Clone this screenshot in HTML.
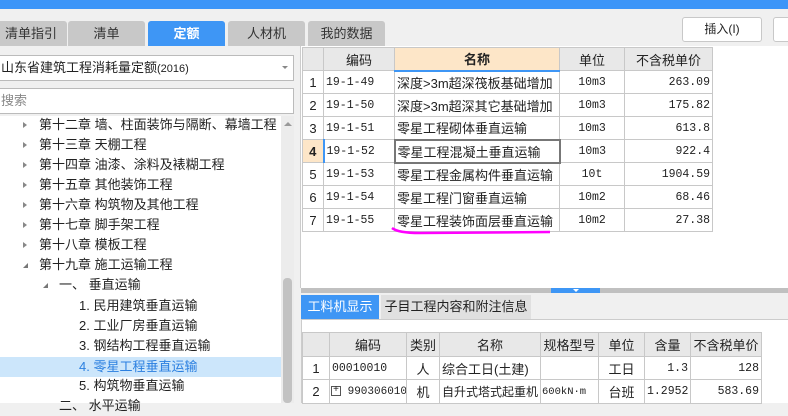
<!DOCTYPE html>
<html><head><meta charset="utf-8"><style>
*{margin:0;padding:0;box-sizing:border-box}
body{width:788px;height:403px;overflow:hidden;background:#f0f0f0;font-family:"Liberation Sans","Noto Sans CJK SC",sans-serif;font-size:12px;color:#222;position:relative}
.a{position:absolute}
.tab{position:absolute;top:21px;height:25px;background:#c8c8c8;border-radius:3px 3px 0 0;text-align:center;line-height:25px;font-size:13px;color:#333}
table{border-collapse:collapse;position:absolute;background:#fff;table-layout:fixed}
td{border:1px solid #c8c8c8;padding:0 2px;white-space:nowrap;overflow:hidden;font-size:13px}
.h td{background:#e8e8e8;text-align:center;font-size:13px}
.m{font-family:"Liberation Mono","Noto Sans CJK SC",monospace;font-size:11.5px}
.r{text-align:right}.c{text-align:center}
.tr{position:absolute;left:0;width:281px;height:20px;line-height:20px;font-size:13px}
.ar{position:absolute;left:23px;top:7px;width:0;height:0;border-left:4px solid #888;border-top:3px solid transparent;border-bottom:3px solid transparent}
.dn{position:absolute;width:0;height:0;border-right:5px solid #777;border-top:5px solid transparent}
</style></head><body>
<div class="a" style="left:0;top:0;width:788px;height:9px;background:#3c95f8"></div>
<div class="tab" style="left:-5px;width:72px">清单指引</div>
<div class="tab" style="left:68px;width:77px">清单</div>
<div class="tab" style="left:148px;width:77px;background:#3e96f5;color:#fff;font-weight:bold">定额</div>
<div class="tab" style="left:228px;width:77px">人材机</div>
<div class="tab" style="left:308px;width:77px">我的数据</div>
<div class="a" style="left:682px;top:17px;width:80px;height:25px;background:#fff;border:1px solid #c8c8c8;border-radius:3px;text-align:center;line-height:23px;font-size:12px">插入(I)</div>
<div class="a" style="left:773px;top:17px;width:30px;height:25px;background:#fff;border:1px solid #c8c8c8;border-radius:3px"></div>
<div class="a" style="left:-2px;top:55px;width:296px;height:26px;background:#fff;border:1px solid #bbb;line-height:24px;font-size:13px;padding-left:2px">山东省建筑工程消耗量定额<span style="font-size:11px">(2016)</span></div>
<div class="a" style="left:282px;top:66px;border-left:3px solid transparent;border-right:3px solid transparent;border-top:3px solid #888"></div>
<div class="a" style="left:-2px;top:88px;width:296px;height:26px;background:#fff;border:1px solid #bbb;line-height:24px;font-size:13px;color:#888;padding-left:2px">搜索</div>
<div class="a" style="left:0;top:116px;width:281px;height:287px;background:#fff"></div>
<div class="a" style="left:281px;top:116px;width:13px;height:287px;background:#ececec"></div>
<div class="a" style="left:283px;top:278px;width:9px;height:125px;background:#c2c2c2;border-radius:4px"></div>
<div class="a" style="left:284px;top:122px;border-left:4px solid transparent;border-right:4px solid transparent;border-bottom:4px solid #999"></div>
<div class="tr" style="top:115px"><i class="ar"></i><span class="a" style="left:39px">第十二章 墙、柱面装饰与隔断、幕墙工程</span></div>
<div class="tr" style="top:135px"><i class="ar"></i><span class="a" style="left:39px">第十三章 天棚工程</span></div>
<div class="tr" style="top:155px"><i class="ar"></i><span class="a" style="left:39px">第十四章 油漆、涂料及裱糊工程</span></div>
<div class="tr" style="top:175px"><i class="ar"></i><span class="a" style="left:39px">第十五章 其他装饰工程</span></div>
<div class="tr" style="top:195px"><i class="ar"></i><span class="a" style="left:39px">第十六章 构筑物及其他工程</span></div>
<div class="tr" style="top:215px"><i class="ar"></i><span class="a" style="left:39px">第十七章 脚手架工程</span></div>
<div class="tr" style="top:235px"><i class="ar"></i><span class="a" style="left:39px">第十八章 模板工程</span></div>
<div class="tr" style="top:255px"><i class="dn" style="left:23px;top:8px"></i><span class="a" style="left:39px">第十九章 施工运输工程</span></div>
<div class="tr" style="top:275px"><i class="dn" style="left:43px;top:8px"></i><span class="a" style="left:59px">一、 垂直运输</span></div>
<div class="tr" style="top:296px"><span class="a" style="left:79px">1. 民用建筑垂直运输</span></div>
<div class="tr" style="top:316px"><span class="a" style="left:79px">2. 工业厂房垂直运输</span></div>
<div class="tr" style="top:336px"><span class="a" style="left:79px">3. 钢结构工程垂直运输</span></div>
<div class="tr" style="top:357px;background:#cce6fb;color:#2a7fe0"><span class="a" style="left:79px">4. 零星工程垂直运输</span></div>
<div class="tr" style="top:376px"><span class="a" style="left:79px">5. 构筑物垂直运输</span></div>
<div class="tr" style="top:396px"><span class="a" style="left:59px">二、 水平运输</span></div>
<div class="a" style="left:300px;top:46px;width:488px;height:242px;background:#fff;border-left:1px solid #ccc"></div>
<table style="left:302px;top:47px;width:410px">
<colgroup><col style="width:21px"><col style="width:71px"><col style="width:165px"><col style="width:65px"><col style="width:88px"></colgroup>
<tr class="h" style="height:23px"><td></td><td>编码</td><td style="background:#fde6c8;font-weight:bold;border-bottom:2px solid #3e96f5">名称</td><td>单位</td><td>不含税单价</td></tr>
<tr style="height:23px"><td class="c">1</td><td class="m">19-1-49</td><td>深度&gt;3m超深筏板基础增加</td><td class="c m">10m3</td><td class="r m">263.09</td></tr>
<tr style="height:23px"><td class="c">2</td><td class="m">19-1-50</td><td>深度&gt;3m超深其它基础增加</td><td class="c m">10m3</td><td class="r m">175.82</td></tr>
<tr style="height:23px"><td class="c">3</td><td class="m">19-1-51</td><td>零星工程砌体垂直运输</td><td class="c m">10m3</td><td class="r m">613.8</td></tr>
<tr style="height:23px"><td class="c" style="background:#fde6c8;font-weight:bold;border-right:2px solid #3e96f5">4</td><td class="m">19-1-52</td><td style="border:2px solid #777">零星工程混凝土垂直运输</td><td class="c m">10m3</td><td class="r m">922.4</td></tr>
<tr style="height:23px"><td class="c">5</td><td class="m">19-1-53</td><td>零星工程金属构件垂直运输</td><td class="c m">10t</td><td class="r m">1904.59</td></tr>
<tr style="height:23px"><td class="c">6</td><td class="m">19-1-54</td><td>零星工程门窗垂直运输</td><td class="c m">10m2</td><td class="r m">68.46</td></tr>
<tr style="height:23px"><td class="c">7</td><td class="m">19-1-55</td><td>零星工程装饰面层垂直运输</td><td class="c m">10m2</td><td class="r m">27.38</td></tr>
</table>
<svg class="a" style="left:390px;top:225px" width="170" height="12"><path d="M2 3 Q8 8 30 8 L160 7" stroke="#f0f" stroke-width="2.5" fill="none"/></svg>
<div class="a" style="left:301px;top:288px;width:487px;height:5px;background:#c0c0c0"></div>
<div class="a" style="left:551px;top:288px;width:49px;height:5px;background:#3e96f5"></div>
<div class="a" style="left:573px;top:289px;border-left:3px solid transparent;border-right:3px solid transparent;border-top:3px solid #fff"></div>
<div class="a" style="left:301px;top:295px;width:78px;height:24px;background:#3e96f5;color:#fff;line-height:24px;text-align:center;font-size:13px">工料机显示</div>
<div class="a" style="left:381px;top:295px;width:150px;height:24px;background:#e0e0e0;line-height:24px;text-align:center;font-size:13px">子目工程内容和附注信息</div>
<div class="a" style="left:301px;top:319px;width:487px;height:84px;background:#fff;border-top:1px solid #ccc;border-left:1px solid #ccc"></div>
<table style="left:302px;top:332px;width:459px">
<colgroup><col style="width:27px"><col style="width:77px"><col style="width:33px"><col style="width:101px"><col style="width:58px"><col style="width:46px"><col style="width:46px"><col style="width:71px"></colgroup>
<tr class="h" style="height:24px"><td></td><td>编码</td><td>类别</td><td>名称</td><td>规格型号</td><td>单位</td><td>含量</td><td>不含税单价</td></tr>
<tr style="height:23px"><td class="c">1</td><td class="m">00010010</td><td class="c">人</td><td>综合工日(土建)</td><td></td><td class="c">工日</td><td class="r m">1.3</td><td class="r m">128</td></tr>
<tr style="height:24px"><td class="c">2</td><td class="m" style="padding-left:1px;font-size:11px"><span style="display:inline-block;width:10px;height:10px;border:1px solid #555;font-size:10px;line-height:8px;text-align:center;vertical-align:middle">+</span> 990306010</td><td class="c">机</td><td style="font-size:12px">自升式塔式起重机</td><td class="m" style="padding:0 1px;font-size:10.5px">600kN·m</td><td class="c">台班</td><td class="r m">1.2952</td><td class="r m">583.69</td></tr>
</table>
</body></html>
